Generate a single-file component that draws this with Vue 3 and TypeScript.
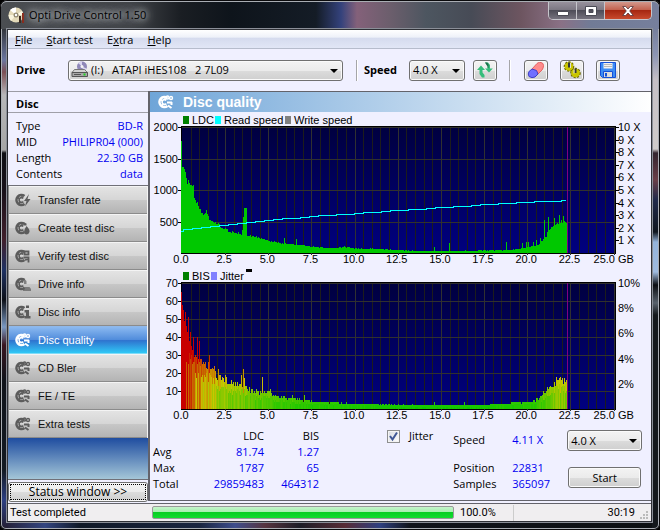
<script setup lang="ts">
import { ref } from 'vue'

type Point = [number, number]

interface Bar { x: number; y: number; h: number; fill: string }

const navItems = [
  { label: 'Transfer rate', badge: 'bolt' },
  { label: 'Create test disc', badge: 'drop' },
  { label: 'Verify test disc', badge: 'search' },
  { label: 'Drive info', badge: 'drive' },
  { label: 'Disc info', badge: 'info' },
  { label: 'Disc quality', badge: 'gear' },
  { label: 'CD Bler', badge: 'gear' },
  { label: 'FE / TE', badge: 'gear' },
  { label: 'Extra tests', badge: 'gear' },
]
const active = ref('Disc quality')
const jitter = ref(true)

const discInfo = [
  ['Type', 'BD-R'],
  ['MID', 'PHILIPR04 (000)'],
  ['Length', '22.30 GB'],
  ['Contents', 'data'],
]
const totals = [
  ['Avg', '81.74', '1.27'],
  ['Max', '1787', '65'],
  ['Total', '29859483', '464312'],
]

const left = 32
const right = 464
const top = 15
const base = 141
const perGb = 17.26
const columns = 386

const minor = Array.from({ length: 50 }, (_, i) => i)
  .filter((i) => i > 0 && i % 5 !== 0)
  .map((i) => Math.round(left + i * perGb / 2))
const major = Array.from({ length: 10 }, (_, i) => i + 1).map((i) => Math.round(left + i * 2.5 * perGb))
const xLabels = Array.from({ length: 10 }, (_, i) => ({ x: left - 1 + i * 2.5 * perGb, text: (i * 2.5).toFixed(1) }))
const speedLabels = Array.from({ length: 10 }, (_, i) => ({ y: Math.round(base - (i + 1) * 12.6), text: `${i + 1} X` }))
const jitterLabels = [2, 4, 6, 8, 10].map((v) => ({ y: Math.round(base - v * 12.6), text: `${v}%` }))
const ldcLabels = [500, 1000, 1500, 2000].map((v) => ({ y: Math.round(base - v / 15.9), text: `${v}` }))
const bisLabels = [10, 20, 30, 40, 50, 60, 70].map((v) => ({ y: Math.round(base - v * 1.8), text: `${v}` }))

function curve(points: Point[], x: number): number {
  for (let i = 1; i < points.length; i++) {
    const [x0, y0] = points[i - 1]
    const [x1, y1] = points[i]
    if (x <= x1) return y0 + (y1 - y0) * (x - x0) / (x1 - x0)
  }
  return points[points.length - 1][1]
}

function noise(i: number): number {
  const s = Math.sin(i * 12.9898 + 4.1) * 43758.5453
  return s - Math.floor(s)
}

const ldcCurve: Point[] = [
  [0, 1780], [1, 1360], [4, 1270], [6, 1130], [9, 1050], [10, 1100], [12, 1060], [13, 880], [16, 780], [19, 680],
  [22, 620], [25, 640], [28, 530], [32, 490], [37, 460], [40, 380], [44, 390], [48, 330], [56, 310], [65, 270],
  [75, 250], [88, 185], [100, 150], [120, 115], [140, 85], [155, 70], [163, 95], [175, 65], [190, 65], [210, 45],
  [240, 25], [300, 30], [330, 45], [345, 80], [357, 120], [362, 210], [368, 360], [374, 440], [379, 500],
  [383, 500], [385, 450],
]
const ldcSpikes: Record<number, number> = {
  0: 1787, 1: 1360, 61: 360, 62: 570, 63: 720, 64: 720, 65: 720, 103: 240, 115: 220, 253: 90, 268: 155, 325: 170,
  341: 160, 345: 180, 347: 180, 352: 180, 355: 210, 359: 240, 363: 530, 365: 250, 367: 580, 373: 550, 378: 600,
  382: 590,
}

const ldcPath = (() => {
  let d = `M${left - 1} ${base}`
  for (let i = 0; i < columns; i++) {
    let v = curve(ldcCurve, i) * (0.95 + noise(i) * 0.1) + noise(i + 40) * 12
    if (ldcSpikes[i]) v = ldcSpikes[i]
    d += `V${base - Math.round(v / 15.9)}h1`
  }
  return d + `V${base}z`
})()

const speedPath = (() => {
  let d = `M${left - 1} 119h2`
  for (let x = 2; x < columns; x += 9) {
    const y = curve([[2, 117], [36, 113], [80, 108], [130, 104], [185, 100], [260, 95], [320, 91], [385, 88]], x)
    d += `V${Math.round(y)}H${left - 1 + Math.min(x + 9, columns - 1)}`
  }
  return d
})()

const bisCurve: Point[] = [
  [0, 58], [3, 48], [8, 41], [12, 33], [16, 30], [20, 27], [27, 24], [35, 18], [45, 16], [55, 13], [62, 13],
  [70, 10], [80, 9], [88, 9], [95, 7], [105, 6], [120, 5], [140, 4], [180, 3], [250, 2], [300, 2], [318, 3],
  [350, 4], [358, 6], [364, 9], [369, 12], [375, 15], [380, 16], [385, 15],
]
const bisSpikes: Record<number, number> = {
  0: 65, 1: 58, 3: 49, 4: 54, 7: 51, 9: 43, 12: 40, 16: 40, 18: 38, 28: 30, 33: 24, 37: 22, 44: 19, 60: 19, 62: 22,
  63: 17, 81: 18, 89: 11, 111: 8, 123: 8, 253: 4, 283: 4, 362: 10, 366: 12, 373: 15, 375: 18, 379: 18,
}

function heat(v: number): string {
  const r = Math.round(Math.min(1, v / 17) * 200)
  const g = Math.round((v <= 17 ? 1 : Math.max(0, 1 - (v - 17) / 17)) * 200)
  return `rgb(${r},${g},0)`
}

const bisBars: Bar[] = []
for (let i = 0; i < columns; i++) {
  const high = bisSpikes[i] ?? Math.round(curve(bisCurve, i) * (0.88 + noise(i + 7) * 0.25))
  const low = Math.round(curve(bisCurve, i) * (0.55 + noise(i + 91) * 0.4))
  for (const v of [high, Math.min(low, high)]) {
    const h = Math.round(v * 1.8)
    bisBars.push({ x: left - 1 + i, y: base - h, h, fill: heat(v) })
  }
}
</script>

<template>
  <div class="window">
    <header class="titlebar">
      <svg class="app-icon" width="18" height="18" viewBox="0 0 18 18" aria-hidden="true">
        <circle cx="8" cy="8" r="7.5" fill="#e3d9b8" />
        <path d="M8 8 2 3A7.5 7.5 0 0 1 8 .5z" fill="#fff" />
        <path d="M8 8 3 14A7.5 7.5 0 0 1 .5 8z" fill="#f8f3dc" />
        <path d="M8 8 14 4 15.5 8z" fill="#fffbe6" />
        <circle cx="8" cy="8" r="2.5" fill="#8f8770" />
        <circle cx="8" cy="8" r="1.2" fill="#fff" />
        <path d="M11 9h2v7h-2z" fill="#3a2a20" />
        <path d="M14 6h2v10h-2z" fill="#8a2a1a" />
      </svg>
      <h1>Opti Drive Control 1.50</h1>
      <div class="captions">
        <button class="cap" aria-label="Minimize">
          <svg width="12" height="12" viewBox="0 0 12 12"><path d="M.5 6.5h11v4H.5z" fill="#fff" stroke="#4b4b55" /></svg>
        </button>
        <button class="cap" aria-label="Maximize">
          <svg width="12" height="12" viewBox="0 0 12 12"><path d="M.5 1.5h11v9H.5zM4 4.500v3h4v-3z" fill="#fff" fill-rule="evenodd" stroke="#4b4b55" /></svg>
        </button>
        <button class="cap close" aria-label="Close">
          <svg width="12" height="12" viewBox="0 0 12 12"><path d="M.7 1.500h3L6 4l2.300-2.500h3L7.700 6l3.600 4.500h-3L6 8l-2.300 2.500h-3L4.300 6z" fill="#fff" stroke="#573338" stroke-width=".8" /></svg>
        </button>
      </div>
    </header>

    <div class="client">
      <nav class="menubar">
        <a href="#"><u>F</u>ile</a>
        <a href="#"><u>S</u>tart test</a>
        <a href="#">E<u>x</u>tra</a>
        <a href="#"><u>H</u>elp</a>
      </nav>

      <div class="toolbar">
        <label class="drive-label" for="drive">Drive</label>
        <div class="combo drive">
          <svg class="drive-icon" width="18" height="18" viewBox="0 0 18 18" aria-hidden="true">
            <circle cx="11" cy="5.500" r="5" fill="#8f88b8" />
            <path d="M11 5.500 7 2A5 5 0 0 1 11 .5zM11 5.500l4.500 2a5 5 0 0 1-3 3z" fill="#d9d5f0" />
            <circle cx="11" cy="5.500" r="1.500" fill="#f4f4f4" />
            <path d="M3.500 8.500h10l3 3H1z" fill="#d0d0d0" stroke="#777" />
            <path d="M1 11.500h15.500v4H1z" fill="#a8a8a8" stroke="#555" />
            <path d="M3 13.500h7" stroke="#555" />
            <path d="M12.500 12.500h2v2h-2z" fill="#1fd51f" />
          </svg>
          <select id="drive"><option>(I:)&nbsp;&nbsp; ATAPI iHES108&nbsp;&nbsp; 2 7L09</option></select>
          <i class="arrow"></i>
        </div>
        <span class="rule"></span>
        <label class="speed-label" for="speed">Speed</label>
        <div class="combo speed">
          <select id="speed"><option>4.0 X</option></select>
          <i class="arrow"></i>
        </div>
        <button class="tool refresh" aria-label="Refresh">
          <svg width="16" height="16" viewBox="0 0 16 16">
            <path d="M4 3.500 8 8H5.500V10.500L7.500 13V15.500H5L2.500 12V8H0z" fill="#35bd7b" />
            <path d="M8 .5h3l2 2.500V6.500h2.800L12 10.500 8 6.500h2.500V4.500z" fill="#35bd7b" />
            <path d="M8 .5h2.200l1.300 2V6h-.8V4.500z" fill="#1d6b4a" />
          </svg>
        </button>
        <span class="rule second"></span>
        <button class="tool" aria-label="Erase">
          <svg width="18" height="18" viewBox="0 0 18 18">
            <path d="M5 8 10 2.500Q11 1.500 12.500 1.500H14Q16.500 2 16.500 4.500T15 9L11 13z" fill="#ff8c8c" stroke="#e66262" />
            <path d="M5 8 2 10.500Q.5 13 2 15.500 5 17.500 8 16L11 13 9.500 9.500z" fill="#7070ff" stroke="#3f3fc8" />
          </svg>
        </button>
        <button class="tool" aria-label="Settings">
          <svg width="18" height="18" viewBox="0 0 18 18">
            <g fill="#bdb900" stroke="#6d6a00">
              <circle cx="6" cy="5.500" r="4.300" stroke-dasharray="2 1.200" stroke-width="2" />
              <circle cx="12.500" cy="12" r="4.300" stroke-dasharray="2 1.200" stroke-width="2" />
            </g>
            <circle cx="6" cy="5.500" r="4.300" fill="#cac600" />
            <circle cx="12.500" cy="12" r="4.300" fill="#cac600" />
            <path d="M6 1.500v5M12.500 7.500v4.500" stroke="#33363a" stroke-width="2" />
            <path d="M7.500 2v5M11 8.500v4" stroke="#dcdcdc" />
          </svg>
        </button>
        <button class="tool" aria-label="Save">
          <svg width="18" height="18" viewBox="0 0 18 18">
            <path d="M1.500 1.500h15v15h-13l-2-2z" fill="#3c8cf4" stroke="#1450d8" />
            <path d="M4.500 2h9v5.500h-9z" fill="#f2f2f2" />
            <path d="M5 3.500h8M5 5.500h8" stroke="#b9b9b9" />
            <path d="M4.500 10.500h9v6h-9z" fill="#ddd" stroke="#1450d8" />
            <path d="M6 12h2v3.500H6z" fill="#1450d8" />
          </svg>
        </button>
      </div>

      <div class="body">
        <aside class="sidebar">
          <h2>Disc</h2>
          <dl class="disc-info">
            <div v-for="[k, v] in discInfo" :key="k"><dt>{{ k }}</dt><dd>{{ v }}</dd></div>
          </dl>
          <div class="nav">
            <button
              v-for="item in navItems"
              :key="item.label"
              :class="{ active: item.label === active }"
              @click="active = item.label"
            >
              <svg width="16" height="14" viewBox="0 0 16 14" aria-hidden="true">
                <g fill="none" stroke="currentColor">
                  <path stroke-width="2.600" d="M9.500 3A5 5 0 1 0 9.500 11" />
                  <path stroke-width="1.600" d="M8.300 5.400A2.400 2.400 0 1 0 8.300 8.600" />
                  <path stroke-width="1.500" d="M2.500 4.500 5 6M5 8.500 4 11M7 1v3" />
                </g>
                <path v-if="item.badge === 'bolt'" d="M14 1 9 8h2.500L10 13.500 15.500 6h-3z" fill="currentColor" />
                <path v-else-if="item.badge === 'drop'" d="M11.500 5Q15 8.500 14.500 11 13.500 13.500 11.500 13.500T9 11Q9 8.500 11.500 5zM9 1.500l2.500 1v2H9z" fill="currentColor" />
                <g v-else-if="item.badge === 'search'" fill="none" stroke="currentColor" stroke-width="1.800">
                  <path d="M9.500 2.500h4v3h-4zM8.500 8.500h5v5M10 11l4-1" />
                </g>
                <path v-else-if="item.badge === 'drive'" d="M9 1.500 11.500 4v3H9zM8 10h6.500l1.500 2v2H8z" fill="currentColor" opacity=".7" />
                <path v-else-if="item.badge === 'info'" d="M11 .5h3v2.500h-3zM9.500 5h4.500v6h1.500v2.500h-6V11H11V7.500H9.500z" fill="currentColor" />
                <g v-else fill="none" stroke="currentColor">
                  <circle cx="9.500" cy="2.500" r="1.500" stroke-width="1.400" />
                  <circle cx="13" cy="3" r="1.500" stroke-width="1.400" />
                  <path d="M9 7.500h5M10 10.500l3.500 2.500M13.500 7v3" stroke-width="2" />
                </g>
              </svg>
              {{ item.label }}
            </button>
          </div>
          <div class="fill"></div>
          <button class="status-btn">Status window &gt;&gt;</button>
        </aside>

        <main class="panel">
          <h2 class="panel-head">
            <svg width="16" height="14" viewBox="0 0 16 14" aria-hidden="true">
              <g fill="none" stroke="#fff">
                <path stroke-width="2.600" d="M9.500 3A5 5 0 1 0 9.500 11" />
                <path stroke-width="1.600" d="M8.300 5.400A2.400 2.400 0 1 0 8.300 8.600" />
                <path stroke-width="1.500" d="M2.500 4.500 5 6M5 8.500 4 11M7 1v3" />
                <circle cx="9.500" cy="2.500" r="1.500" stroke-width="1.400" />
                <circle cx="13" cy="3" r="1.500" stroke-width="1.400" />
                <path d="M9 7.500h5M10 10.500l3.500 2.500M13.500 7v3" stroke-width="2" />
              </g>
            </svg>
            Disc quality
          </h2>

          <svg v-for="kind in ['ldc', 'bis']" :key="kind" class="chart" viewBox="0 0 501 156" shape-rendering="crispEdges">
            <defs>
              <linearGradient :id="`bg-${kind}`" x1="0" y1="0" x2="0" y2="1">
                <stop offset="0" stop-color="#000040" /><stop offset="1" stop-color="#000080" />
              </linearGradient>
            </defs>
            <g v-if="kind === 'ldc'">
              <path d="M33 4h6v8h-6z" fill="#008000" /><text x="42" y="12">LDC</text>
              <path d="M65 4h6v8h-6z" fill="#00ffff" /><text x="74" y="12">Read speed</text>
              <path d="M135 4h6v8h-6z" fill="#808080" /><text x="144" y="12">Write speed</text>
            </g>
            <g v-else>
              <path d="M33 4h6v8h-6z" fill="#008000" /><text x="42" y="12">BIS</text>
              <path d="M61 4h6v8h-6z" fill="#8080ff" /><text x="70" y="12">Jitter</text>
              <path d="M96 1h6v3h-6z" />
            </g>
            <rect :x="left - 1" :y="top - 1" :width="right - left + 3" :height="base - top + 2" fill="#000" />
            <rect :x="left" :y="top" :width="right - left + 1" :height="base - top" :fill="`url(#bg-${kind})`" />
            <path v-for="x in minor" :key="`n${x}`" :d="`M${x} ${top}h1V${base}h-1z`" fill="#1c1c1c" />
            <path v-for="x in major" :key="`m${x}`" :d="`M${x} ${top}h1V${base + 2}h-1z`" fill="#303030" />
            <g v-for="l in kind === 'ldc' ? ldcLabels : bisLabels" :key="l.text">
              <path :d="`M${left} ${l.y}H${right}v1H${left}z`" fill="#303030" />
              <path :d="`M${left - 4} ${l.y}h3v1h-3z`" />
              <text x="28" :y="l.y + 4" text-anchor="end">{{ l.text }}</text>
            </g>
            <path :d="`M417 ${top}h1V${base}h-1z`" fill="#800080" />
            <template v-if="kind === 'ldc'">
              <path :d="ldcPath" fill="#00c800" />
              <path :d="speedPath" fill="none" stroke="#00ffff" transform="translate(0 .5)" />
              <g v-for="l in speedLabels" :key="l.text">
                <path :d="`M${right + 2} ${l.y}h3v1h-3z`" />
                <text x="468" :y="l.y + 4">{{ l.text }}</text>
              </g>
            </template>
            <template v-else>
              <rect v-for="(b, i) in bisBars" :key="i" :x="b.x" :y="b.y" width="1" :height="b.h" :fill="b.fill" />
              <text v-for="l in jitterLabels" :key="l.text" x="468" :y="l.y + 4">{{ l.text }}</text>
            </template>
            <text v-for="l in xLabels" :key="l.text" :x="l.x" y="151" text-anchor="middle">{{ l.text }}</text>
            <text x="465" y="151" text-anchor="end">25.0</text>
            <text x="468" y="151">GB</text>
          </svg>

          <div class="results">
            <table>
              <thead><tr><th></th><th>LDC</th><th>BIS</th></tr></thead>
              <tbody>
                <tr v-for="r in totals" :key="r[0]"><th>{{ r[0] }}</th><td>{{ r[1] }}</td><td>{{ r[2] }}</td></tr>
              </tbody>
            </table>
            <label class="jitter">
              <input v-model="jitter" type="checkbox" />
              <svg class="tick" width="13" height="13" viewBox="0 0 13 13" aria-hidden="true">
                <path v-if="jitter" d="M3 6 5.500 9.500 10 2.500" fill="none" stroke="#3f5795" stroke-width="2" />
              </svg>
              Jitter
            </label>
            <dl class="run">
              <div class="gap"><dt>Speed</dt><dd>4.11 X</dd></div>
              <div><dt>Position</dt><dd>22831</dd></div>
              <div><dt>Samples</dt><dd>365097</dd></div>
            </dl>
            <div class="actions">
              <div class="combo">
                <select aria-label="Test speed"><option>4.0 X</option></select>
                <i class="arrow"></i>
              </div>
              <button class="start">Start</button>
            </div>
          </div>
        </main>
      </div>

      <footer class="statusbar">
        <span class="message">Test completed</span>
        <div class="progress" role="progressbar" aria-label="Progress" aria-valuenow="100"></div>
        <span class="percent">100.0%</span>
        <span class="time">30:19</span>
        <svg class="grip" width="10" height="10" viewBox="0 0 10 10" aria-hidden="true">
          <path d="M7 0h2v2H7zM4 3h2v2H4zM7 3h2v2H7zM1 6h2v2H1zM4 6h2v2H4zM7 6h2v2H7z" fill="#bbb" />
        </svg>
      </footer>
    </div>
  </div>
</template>

<style>
body { background: #000; }
</style>

<style scoped>
* { box-sizing: border-box; margin: 0; }
.window {
  min-height: 100vh;
  display: flex;
  flex-direction: column;
  padding: 0 8px 8px 7px;
  border-radius: 7px 7px 6px 6px;
  box-shadow: inset 0 0 0 1px #0a0a0c, inset 0 0 0 2px #a9adb3;
  background:
    linear-gradient(#33363c 29px, #6b76a0 60px, #7c4f55 72px, #b7b7b9 95px, #a5a5a5 150px, #0e0f14 153px, #171019 190px, #41202c 240px, #1f3263 270px, #0d1018 300px, #7a99c2 327px, #3a1620 345px, #10131a 380px, #131a22 470px, #2c3f82 500px, #231c2e) left / 8px 100% no-repeat,
    linear-gradient(#767f9c 29px, #8c95b4 55px, #c5bfc5 80px, #cfcbca 149px, #33252f 153px, #6a3f48 180px, #20294a 200px, #10161f 232px, #94b3da 242px, #9fbbe0 272px, #0b0d12 285px, #59626d 303px, #14181c 315px, #14181c) right / 8px 100% no-repeat,
    linear-gradient(90deg, #231c2e, #334580 45px, #0f1826 80px, #1a2540 200px, #3e4d8c 235px, #56343f 265px, #1c1c26 300px, #572b35 345px, #2e3f80 380px, #10131a 410px, #0c0f12);
  font: 11px/16px "Open Sans", "Noto Sans", sans-serif;
  color: #000;
}
button, select, input { font: inherit; color: inherit; }
a { color: inherit; text-decoration: none; }

.titlebar {
  display: flex;
  align-items: flex-start;
  height: 28px;
  margin: 1px -7px 0 -6px;
  padding: 0 7px;
  border-top: 1px solid #a9adb3;
  border-radius: 6px 6px 0 0;
  background: linear-gradient(90deg, #4b4e52, #404347 130px, #1a1e23 180px, #0e141b 230px, #141c26 315px, #34427c 340px, #84617a 356px, #6b5e6c 390px, #4d5660 425px, #474b56 470px, #6d5560 520px, #8a7186 560px, #717b96 590px, #767f9c);
}
.app-icon { margin-top: 5px; }
h1 {
  flex: 1;
  margin: 5px 0 0 3px;
  font-size: 11px;
  font-weight: 400;
  line-height: 16px;
  text-shadow: 0 0 5px #b4b7bb, 0 0 8px #b4b7bb, 0 0 10px #a4a7ab, 0 0 14px #999;
}
.captions {
  display: flex;
  height: 18px;
  border: 1px solid #c6c6cc;
  border-top: 0;
  border-radius: 0 0 5px 5px;
  overflow: hidden;
}
.cap {
  width: 28px;
  padding: 0;
  border: 0;
  border-right: 1px solid #c6c6cc;
  background: linear-gradient(#97919c, #7c7883 45%, #4e4d58 50%, #75727e);
  display: grid;
  place-items: center;
}
.close { width: 46px; border: 0; background: linear-gradient(#d3988c, #c36350 45%, #a62711 50%, #c84a2d); }

.client {
  flex: 1;
  display: flex;
  flex-direction: column;
  border: 1px solid #2f3137;
  outline: 1px solid #8b8f98;
  background: #f0f0ff;
}
.menubar {
  display: flex;
  gap: 14px;
  height: 19px;
  padding-left: 7px;
  line-height: 20px;
  background: linear-gradient(#fff, #eef1f9 40%, #d5dbee 45%, #e1e6f6);
  border-bottom: 1px solid #b6bccc;
}
.toolbar { display: flex; height: 42px; align-items: center; padding-left: 8px; }
.toolbar label { font-weight: 700; }
.drive-label { width: 52px; }
.combo, .tool, .start, .status-btn {
  border: 1px solid #707070;
  border-radius: 3px;
  background: linear-gradient(#f3f3f3, #ebebeb 50%, #dcdcdc 52%, #cfcfcf);
  box-shadow: inset 0 0 0 1px #fafafa;
}
.combo { position: relative; display: flex; align-items: center; height: 21px; }
.combo select {
  flex: 1;
  height: 100%;
  min-width: 0;
  padding: 0 16px 0 3px;
  border: 0;
  background: none;
  appearance: none;
}
.arrow {
  position: absolute;
  right: 4px;
  top: 8px;
  border: 4px solid transparent;
  border-top-color: #000;
  border-bottom: 0;
  pointer-events: none;
}
.drive { flex: 0 1 275px; }
.drive-icon { margin-left: 2px; }
.drive select { padding-left: 2px; }
.rule { width: 2px; height: 21px; margin-left: 13px; background: #a5a5a8; border-right: 1px solid #fff; }
.speed-label { width: 45px; margin-left: 6px; }
.speed { flex: 0 0 56px; }
.tool { flex: none; width: 24px; height: 21px; padding: 0; display: grid; place-items: center; }
.refresh { margin-left: 8px; }
.rule.second { margin-left: 12px; margin-right: 13px; }
.tool + .tool { margin-left: 12px; }

.body { flex: 1; display: flex; }
.sidebar { width: 140px; display: flex; flex-direction: column; border-top: 1px solid #9c9ca4; }
.sidebar h2 {
  height: 21px;
  padding-left: 8px;
  font-size: 11px;
  line-height: 23px;
  border-bottom: 1px solid #a0a0a8;
}
.disc-info { height: 73px; padding: 5px 5px 0 8px; border-bottom: 1px solid #707078; }
.disc-info div { display: flex; justify-content: space-between; height: 16px; }
dd, td { color: #0000f0; }
.nav { display: flex; flex-direction: column; border-left: 1px solid #8c8c8c; border-right: 1px solid #f4f4f4; }
.nav button {
  display: flex;
  align-items: center;
  gap: 7px;
  height: 28px;
  padding: 0 0 0 6px;
  border: 0;
  border-top: 1px solid #f4f4f4;
  border-bottom: 1px solid #8b8b8b;
  background: linear-gradient(#e3e3e3, #d6d6d6 48%, #c6c6c6 52%, #b4b4b4);
  font: 11px/16px "Liberation Sans", Arial, sans-serif;
  color: #111;
}
.nav svg { color: #5c5c5c; }
.nav button.active {
  color: #fff;
  border-top-color: #8fb8ea;
  border-bottom-color: #7fdcf8;
  background: linear-gradient(#8bb9f0, #4f8bdb 50%, #2f74cf 52%, #30c8f6);
}
.nav button.active svg { color: #fff; }
.fill { flex: 1; background: linear-gradient(#1f4da0, #a4c6d8); border-bottom: 1px solid #707078; }
.status-btn {
  height: 20px;
  margin: 2px 0 1px;
  padding: 0;
  font-size: 12px;
  line-height: 16px;
  outline: 1px dotted #000;
  outline-offset: -3px;
}

.panel {
  flex: 1;
  display: flex;
  flex-direction: column;
  margin-bottom: 2px;
  border: 1px solid #63636b;
  border-width: 1px 0 1px 2px;
}
.panel-head {
  display: flex;
  align-items: center;
  gap: 9px;
  height: 20px;
  padding-left: 8px;
  background: linear-gradient(90deg, #6fa5d8, #fff);
  color: #fff;
  font: bold 14px/20px "Liberation Sans", Arial, sans-serif;
}
.chart { display: block; width: 100%; font: 11px "Liberation Sans", Arial, sans-serif; }
.results { flex: 1; display: flex; padding-left: 3px; }
table { border-collapse: collapse; align-self: flex-start; margin-top: 4px; }
th, td { padding: 0; font-weight: 400; text-align: right; line-height: 16px; }
th:nth-child(2), td:nth-child(2) { width: 77px; }
th:nth-child(3), td:nth-child(3) { width: 55px; }
tbody th { width: 34px; text-align: left; }
.jitter { position: relative; display: flex; align-items: center; gap: 9px; height: 16px; margin: 4px 0 0 68px; }
.jitter input { appearance: none; width: 13px; height: 13px; border: 1px solid #8e8f8f; background: linear-gradient(135deg, #d5d9e0, #fff); box-shadow: inset 0 0 0 1px #f4f4f4; }
.tick { position: absolute; left: 0; pointer-events: none; }
.run { margin: 8px 0 0 20px; }
.run div { display: flex; height: 16px; }
.run .gap { height: 28px; }
.run dt { width: 59px; }
.run dd { width: 55px; }
.actions { width: 75px; display: flex; flex-direction: column; gap: 16px; padding-top: 6px; }
.start { height: 21px; margin: 0 1px; padding: 0; }

.statusbar {
  display: flex;
  align-items: center;
  height: 18px;
  background: #f0eef0;
  border-top: 1px solid #63636b;
  font-family: Roboto, "Open Sans", sans-serif;
}
.message { width: 144px; padding-left: 2px; }
.progress {
  flex: 1;
  height: 13px;
  border: 1px solid #9a9a9a;
  border-radius: 2px;
  background: linear-gradient(#c5f5cb, #a5efae 45%, #06cf22 50%, #10dc2e);
}
.percent { width: 60px; padding-left: 6px; border-right: 1px solid #ccc; }
.time { width: 121px; text-align: right; }
.grip { margin: 6px 2px 0 4px; }
</style>
